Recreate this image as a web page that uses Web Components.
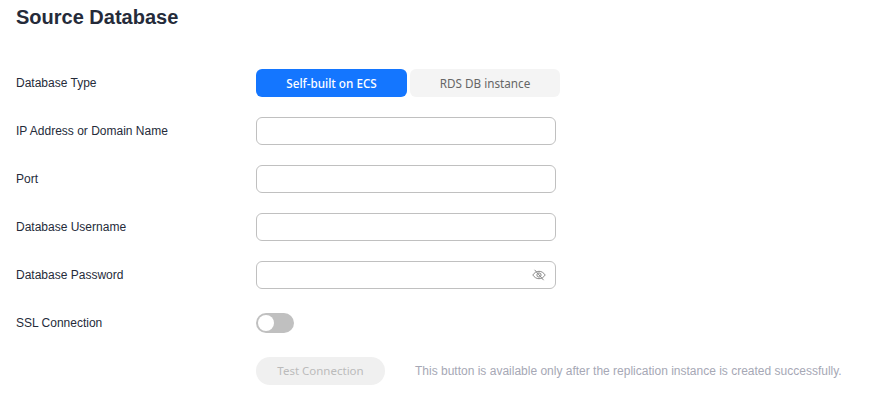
<!DOCTYPE html>
<html>
<head>
<meta charset="utf-8">
<style>
  html, body { margin: 0; background: #fff; }
  body { font-family: "Liberation Sans", Arial, sans-serif; }
</style>
</head>
<body>
<source-form></source-form>

<script>
class FormRow extends HTMLElement {
  constructor() {
    super()
    this.attachShadow({ mode: 'open' })
    this.shadowRoot.innerHTML = `
      <style>
        :host { display: flex; align-items: center; height: 28px; margin-bottom: 20px; }
        .label { width: 240px; flex: none; font-size: 12px; color: #252b3a; line-height: 28px; }
        .control { display: flex; align-items: center; flex: 1; }
      </style>
      <div class="label"><slot name="label"></slot></div>
      <div class="control"><slot></slot></div>
    `
  }
}
customElements.define('form-row', FormRow)

class TextField extends HTMLElement {
  constructor() {
    super()
    this.attachShadow({ mode: 'open' })
    this.shadowRoot.innerHTML = `
      <style>
        :host { display: flex; align-items: center; justify-content: flex-end; box-sizing: border-box;
          width: 300px; height: 28px; padding-right: 9px;
          border: 1px solid #c0c0c0; border-radius: 6px; background: #fff; }
      </style>
      <slot></slot>
    `
  }
}
customElements.define('text-field', TextField)

class SegmentPicker extends HTMLElement {
  constructor() {
    super()
    this.attachShadow({ mode: 'open' })
    this.shadowRoot.innerHTML = `
      <style>
        :host { display: flex; gap: 3px; font-family: "Noto Sans", "Open Sans", sans-serif; font-size: 11.7px; }
        div { width: 151px; height: 28px; line-height: 28px; text-align: center; border-radius: 6px; }
        .on { background: #1476ff; color: #fff; font-weight: 500; }
        .off { width: 150px; background: #f4f4f4; color: #666; }
      </style>
      <div class="on">Self-built on ECS</div>
      <div class="off">RDS DB instance</div>
    `
  }
}
customElements.define('segment-picker', SegmentPicker)

class SwitchToggle extends HTMLElement {
  constructor() {
    super()
    this.attachShadow({ mode: 'open' })
    this.shadowRoot.innerHTML = `
      <style>
        :host { display: block; position: relative; width: 38px; height: 20px; border-radius: 10px; background: #c0c0c0; }
        i { position: absolute; left: 2px; top: 2px; width: 16px; height: 16px; border-radius: 50%; background: #fff; }
      </style>
      <i></i>
    `
  }
}
customElements.define('switch-toggle', SwitchToggle)

class SourceForm extends HTMLElement {
  constructor() {
    super()
    this.attachShadow({ mode: 'open' })
    this.shadowRoot.innerHTML = `
      <style>
        :host { display: block; padding: 6px 0 0 16px; }
        h2 { margin: 0 0 40px; height: 23px; font-size: 20px; line-height: 23px; font-weight: 700; color: #252b3a; }
        .note { margin-left: 30px; font-size: 12px; color: #a6a8b5; }
        .test { width: 129px; height: 28px; line-height: 28px; text-align: center; border-radius: 14px;
          background: #f0f0f0; color: #bbb; font-family: "Noto Sans", "Open Sans", sans-serif; font-size: 11.5px; }
        svg { display: block; }
      </style>
      <h2>Source Database</h2>
      <form-row><span slot="label">Database Type</span><segment-picker></segment-picker></form-row>
      <form-row><span slot="label">IP Address or Domain Name</span><text-field></text-field></form-row>
      <form-row><span slot="label">Port</span><text-field></text-field></form-row>
      <form-row><span slot="label">Database Username</span><text-field></text-field></form-row>
      <form-row><span slot="label">Database Password</span>
        <text-field>
          <svg width="14" height="14" viewBox="0 0 14 14" fill="none" stroke="#8a8a8a" stroke-width="1">
            <path d="M0.8 7C2.4 4.6 4.6 3.3 7 3.3S11.6 4.6 13.2 7C11.6 9.4 9.4 10.7 7 10.7S2.4 9.4 0.8 7Z"/>
            <circle cx="7" cy="7" r="2.1"/>
            <path d="M2.6 1.8L11.6 12.2"/>
          </svg>
        </text-field>
      </form-row>
      <form-row><span slot="label">SSL Connection</span><switch-toggle></switch-toggle></form-row>
      <form-row><span slot="label"></span><div class="test">Test Connection</div><span class="note">This button is available only after the replication instance is created successfully.</span></form-row>
    `
  }
}
customElements.define('source-form', SourceForm)
</script>
</body>
</html>
